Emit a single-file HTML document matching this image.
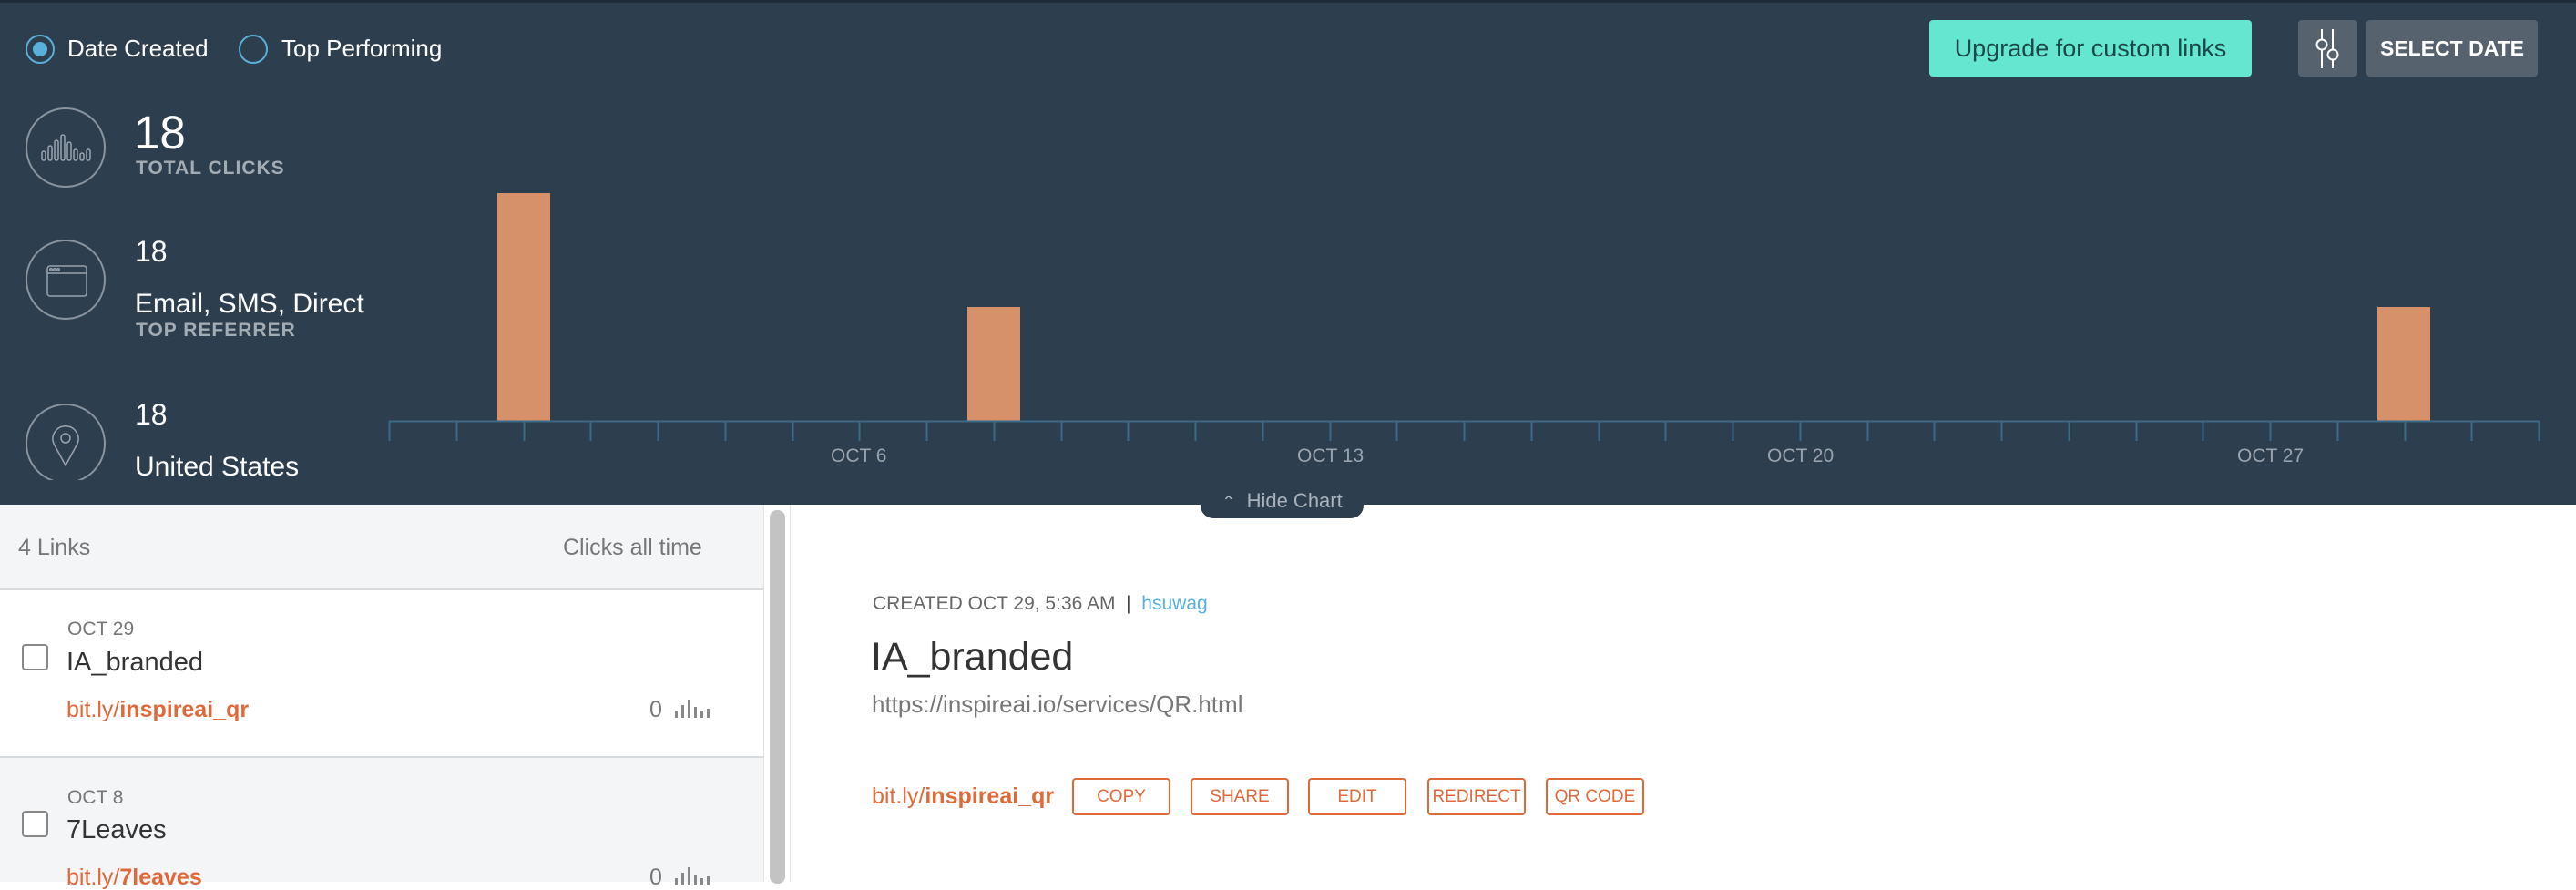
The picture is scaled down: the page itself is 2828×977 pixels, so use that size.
<!DOCTYPE html>
<html><head><meta charset="utf-8">
<style>
*{margin:0;padding:0;box-sizing:border-box}
body{width:2828px;height:968px;overflow:hidden;font-family:"Liberation Sans",sans-serif;background:#fff;position:relative}
.a{position:absolute;white-space:nowrap;line-height:1}
#top{position:absolute;left:0;top:0;width:2828px;height:554px;background:#2d3e4e;border-top:3px solid #1e2c38}
.circ{position:absolute;width:88px;height:88px;border:2px solid #8a949e;border-radius:50%}
.w{color:#fff}
.lbl{color:#a3abb3;font-weight:bold;letter-spacing:1px}
.btn{position:absolute;top:854px;width:108px;height:41px;border:2px solid #e0693a;border-radius:4px;color:#e0693a;font-size:19px;text-align:center;line-height:37px}
.or{color:#e0693a}
</style></head><body>
<div id="top">
  <div class="a" style="left:28px;top:35px;width:32px;height:32px;border:2px solid #5ab0d8;border-radius:50%"></div>
  <div class="a" style="left:36px;top:43px;width:16px;height:16px;background:#5ab0d8;border-radius:50%"></div>
  <div class="a w" style="left:74px;top:37px;font-size:26px">Date Created</div>
  <div class="a" style="left:262px;top:35px;width:32px;height:32px;border:2px solid #5ab0d8;border-radius:50%"></div>
  <div class="a w" style="left:309px;top:37px;font-size:26px">Top Performing</div>

  <div class="a" style="left:2118px;top:19px;width:354px;height:62px;background:#64e6d0;border-radius:4px;color:#1d4847;font-size:27px;text-align:center;line-height:62px">Upgrade for custom links</div>
  <div class="a" style="left:2523px;top:19px;width:65px;height:62px;background:#56636f;border-radius:4px">
    <svg width="65" height="62" viewBox="0 0 65 62"><g stroke="#fff" stroke-width="2" fill="#56636f"><line x1="26" y1="10" x2="26" y2="53"/><line x1="38" y1="10" x2="38" y2="53"/><circle cx="26" cy="27" r="5.5"/><circle cx="38" cy="38" r="5.5"/></g></svg>
  </div>
  <div class="a" style="left:2598px;top:19px;width:188px;height:62px;background:#56636f;border-radius:4px;color:#fff;font-size:23px;font-weight:bold;text-align:center;line-height:62px">SELECT DATE</div>

  <div class="circ" style="left:28px;top:115px">
    <svg width="84" height="84" viewBox="0 0 84 84"><g stroke="#9aa3ad" stroke-width="1.5" fill="none">
      <rect x="16" y="46" width="4" height="10" rx="2"/><rect x="23" y="40" width="4" height="16" rx="2"/><rect x="30" y="34" width="4" height="22" rx="2"/><rect x="37" y="28" width="4" height="28" rx="2"/><rect x="44" y="36" width="4" height="20" rx="2"/><rect x="51" y="44" width="4" height="12" rx="2"/><rect x="58" y="48" width="4" height="8" rx="2"/><rect x="65" y="44" width="4" height="12" rx="2"/></g></svg>
  </div>
  <div class="a w" style="left:147px;top:117px;font-size:51px">18</div>
  <div class="a lbl" style="left:149px;top:171px;font-size:21px">TOTAL CLICKS</div>

  <div class="circ" style="left:28px;top:260px">
    <svg width="84" height="84" viewBox="0 0 84 84"><g stroke="#9aa3ad" stroke-width="1.5" fill="none"><rect x="22" y="27" width="43" height="33" rx="3"/><line x1="22" y1="35" x2="65" y2="35"/><circle cx="26" cy="31" r="1.3"/><circle cx="30" cy="31" r="1.3"/><circle cx="34" cy="31" r="1.3"/></g></svg>
  </div>
  <div class="a w" style="left:148px;top:257px;font-size:32px">18</div>
  <div class="a w" style="left:148px;top:316px;font-size:30px">Email, SMS, Direct</div>
  <div class="a lbl" style="left:149px;top:349px;font-size:21px">TOP REFERRER</div>

  <div style="position:absolute;left:0;top:400px;width:420px;height:124px;overflow:hidden">
    <div class="circ" style="left:28px;top:40px">
      <svg width="84" height="84" viewBox="0 0 84 84"><g stroke="#9aa3ad" stroke-width="1.5" fill="none"><path d="M42 66 L29 42 A14 14 0 1 1 55 42 Z"/><circle cx="42" cy="36" r="5"/></g></svg>
    </div>
    <div class="a w" style="left:148px;top:36px;font-size:32px">18</div>
    <div class="a w" style="left:148px;top:95px;font-size:30px">United States</div>
  </div>

  <svg style="position:absolute;left:0;top:-3px" width="2828" height="554">
    <rect x="546" y="212" width="58" height="250" fill="#d6916b"/>
    <rect x="1062" y="337" width="58" height="125" fill="#d6916b"/>
    <rect x="2610" y="337" width="58" height="125" fill="#d6916b"/>
    <line x1="427" y1="462.5" x2="2788" y2="462.5" stroke="#3b6a89" stroke-width="2"/>
    <g stroke="#3b6a89" stroke-width="2" id="ticks"></g>
  </svg>
  <div class="a" style="left:912px;top:487px;font-size:21px;color:#9aa4ae">OCT 6</div>
  <div class="a" style="left:1424px;top:487px;font-size:21px;color:#9aa4ae">OCT 13</div>
  <div class="a" style="left:1940px;top:487px;font-size:21px;color:#9aa4ae">OCT 20</div>
  <div class="a" style="left:2456px;top:487px;font-size:21px;color:#9aa4ae">OCT 27</div>
</div>
<div class="a" style="left:1318px;top:530px;width:179px;height:39px;background:#2d3e4e;border-radius:0 0 14px 14px;color:#aab3bc;font-size:22px;text-align:center;line-height:40px"><span style="font-size:18px">&#8963;</span>&nbsp; Hide Chart</div>

<div class="a" style="left:0;top:554px;width:840px;height:414px;background:#f4f5f7"></div>
<div class="a" style="left:0;top:646px;width:840px;height:2px;background:#d8dbde"></div>
<div class="a" style="left:0;top:648px;width:840px;height:182px;background:#fff"></div>
<div class="a" style="left:0;top:830px;width:840px;height:2px;background:#d8dbde"></div>
<div class="a" style="left:838px;top:554px;width:30px;height:414px;background:#fff;border-left:1px solid #e3e3e3;border-right:1px solid #e3e3e3"></div>
<div class="a" style="left:845px;top:560px;width:17px;height:410px;background:#c3c3c3;border-radius:8px"></div>

<div class="a" style="left:20px;top:589px;font-size:25px;color:#777">4 Links</div>
<div class="a" style="left:618px;top:589px;font-size:25px;color:#777">Clicks all time</div>

<div class="a" style="left:74px;top:680px;font-size:21px;color:#777">OCT 29</div>
<div class="a" style="left:24px;top:707px;width:29px;height:29px;border:2px solid #888;border-radius:4px;background:#fff"></div>
<div class="a" style="left:73px;top:713px;font-size:29px;color:#333">IA_branded</div>
<div class="a or" style="left:73px;top:767px;font-size:25px">bit.ly/<b>inspireai_qr</b></div>
<div class="a" style="left:713px;top:767px;font-size:25px;color:#777">0</div>
<svg class="a" style="left:740px;top:766px" width="44" height="24"><g fill="#888"><rect x="1" y="14" width="3" height="8"/><rect x="8" y="8" width="3" height="14"/><rect x="15" y="2" width="3" height="20"/><rect x="22" y="10" width="3" height="12"/><rect x="29" y="14" width="3" height="8"/><rect x="36" y="12" width="3" height="10"/></g></svg>

<div class="a" style="left:74px;top:865px;font-size:21px;color:#777">OCT 8</div>
<div class="a" style="left:24px;top:890px;width:29px;height:29px;border:2px solid #888;border-radius:4px;background:#fff"></div>
<div class="a" style="left:73px;top:897px;font-size:29px;color:#333">7Leaves</div>
<div class="a or" style="left:73px;top:951px;font-size:25px">bit.ly/<b>7leaves</b></div>
<div class="a" style="left:713px;top:951px;font-size:25px;color:#777">0</div>
<svg class="a" style="left:740px;top:950px" width="44" height="24"><g fill="#888"><rect x="1" y="14" width="3" height="8"/><rect x="8" y="8" width="3" height="14"/><rect x="15" y="2" width="3" height="20"/><rect x="22" y="10" width="3" height="12"/><rect x="29" y="14" width="3" height="8"/><rect x="36" y="12" width="3" height="10"/></g></svg>

<div class="a" style="left:958px;top:652px;font-size:21px;color:#666">CREATED OCT 29, 5:36 AM <span style="color:#444">&nbsp;|&nbsp;</span> <span style="color:#5ab0d8">hsuwag</span></div>
<div class="a" style="left:956px;top:700px;font-size:43px;color:#333">IA_branded</div>
<div class="a" style="left:957px;top:760px;font-size:26px;color:#777">https://inspireai.io/services/QR.html</div>
<div class="a or" style="left:957px;top:862px;font-size:25px">bit.ly/<b>inspireai_qr</b></div>
<div class="btn" style="left:1177px">COPY</div>
<div class="btn" style="left:1307px">SHARE</div>
<div class="btn" style="left:1436px">EDIT</div>
<div class="btn" style="left:1567px">REDIRECT</div>
<div class="btn" style="left:1697px">QR CODE</div>

<script>
var g=document.getElementById('ticks'),s='';
for(var i=0;i<=32;i++){var x=Math.round(427+i*73.75)+0.5;s+='<line x1="'+x+'" y1="462" x2="'+x+'" y2="484"/>';}
g.innerHTML=s;
</script>
</body></html>
